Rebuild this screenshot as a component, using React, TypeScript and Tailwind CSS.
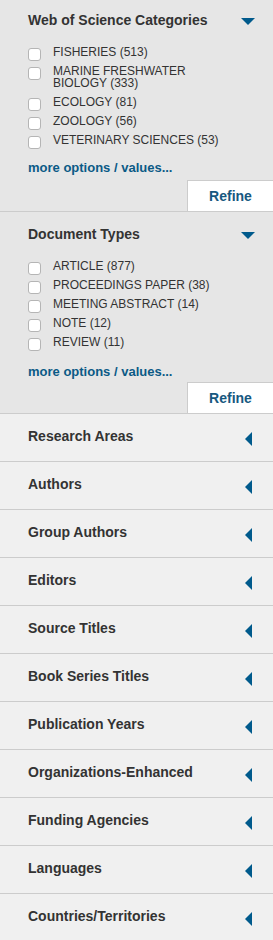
const categories = [
  'FISHERIES (513)',
  'MARINE FRESHWATER BIOLOGY (333)',
  'ECOLOGY (81)',
  'ZOOLOGY (56)',
  'VETERINARY SCIENCES (53)',
]

const docTypes = [
  'ARTICLE (877)',
  'PROCEEDINGS PAPER (38)',
  'MEETING ABSTRACT (14)',
  'NOTE (12)',
  'REVIEW (11)',
]

const collapsed = [
  'Research Areas',
  'Authors',
  'Group Authors',
  'Editors',
  'Source Titles',
  'Book Series Titles',
  'Publication Years',
  'Organizations-Enhanced',
  'Funding Agencies',
  'Languages',
  'Countries/Territories',
]

function CaretDown() {
  return (
    <svg width="14" height="7" viewBox="0 0 14 7" className="mt-[6px] shrink-0">
      <path d="M0 0 H14 L7 7 Z" fill="#005a8c" />
    </svg>
  )
}

function CaretLeft() {
  return (
    <svg width="7" height="14" viewBox="0 0 7 14" className="mt-[4px] shrink-0">
      <path d="M7 0 V14 L0 7 Z" fill="#005a8c" />
    </svg>
  )
}

function FacetSection({
  title,
  items,
  pt,
  moreMt,
  btnMt,
}: {
  title: string
  items: string[]
  pt: string
  moreMt: string
  btnMt: string
}) {
  return (
    <section className={`bg-[#e6e6e6] border-b border-[#cccccc] ${pt}`}>
      <div className="flex items-start justify-between pl-[28px] pr-[18px]">
        <h3 className="text-[14px] leading-[16px] font-bold text-[#333333]">{title}</h3>
        <CaretDown />
      </div>
      <ul className="mt-[18px] flex flex-col gap-[7px] pl-[28px] pr-[45px]">
        {items.map((label) => (
          <li key={label} className="flex items-start">
            <span className="mt-[2px] -mb-[3px] w-[13px] h-[13px] shrink-0 rounded-[3px] border border-[#b5b5b5] bg-white" />
            <span className="ml-[12px] text-[12px] leading-[12px] text-[#333333]">{label}</span>
          </li>
        ))}
      </ul>
      <a className={`block pl-[28px] text-[13px] leading-[16px] font-bold text-[#0b5a86] ${moreMt}`}>
        more options / values...
      </a>
      <div className={`flex justify-end ${btnMt}`}>
        <button className="w-[86px] h-[31px] bg-white border-t border-l border-[#cccccc] text-[14px] font-bold text-[#17587f]">
          Refine
        </button>
      </div>
    </section>
  )
}

export default function App() {
  return (
    <aside className="w-[273px] h-[940px] overflow-hidden bg-[#f0f0f0] font-['Liberation_Sans',Arial,sans-serif]">
      <FacetSection
        title="Web of Science Categories"
        items={categories}
        pt="pt-[12px]"
        moreMt="mt-[14px]"
        btnMt="mt-[4px]"
      />
      <FacetSection
        title="Document Types"
        items={docTypes}
        pt="pt-[14px]"
        moreMt="mt-[16px]"
        btnMt="mt-[2px]"
      />
      {collapsed.map((label) => (
        <div
          key={label}
          className="h-[48px] border-b border-[#cccccc] flex items-start justify-between pt-[14px] pl-[28px] pr-[21px]"
        >
          <span className="text-[14px] leading-[16px] font-bold text-[#333333]">{label}</span>
          <CaretLeft />
        </div>
      ))}
    </aside>
  )
}
